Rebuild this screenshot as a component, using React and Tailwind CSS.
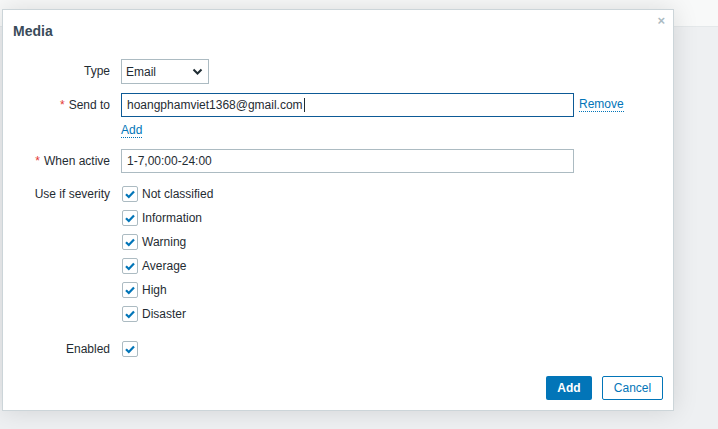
import React from 'react';

const severities = ['Not classified', 'Information', 'Warning', 'Average', 'High', 'Disaster'];

const Check = () => (
  <span className="w-[16px] h-[16px] border border-[#acbbc2] bg-white rounded-[2px] flex items-center justify-center">
    <svg width="12" height="12" viewBox="0 0 12 12">
      <path d="M2 6.2 L4.8 9 L10 3.4" fill="none" stroke="#0275b8" strokeWidth="2.2" />
    </svg>
  </span>
);

const Label = ({ children, req }) => (
  <div className="flex items-center justify-end h-[24px] text-[12px] text-[#1f2c33]">
    {req && <span className="text-[#e33734] mr-[4px]">*</span>}
    {children}
  </div>
);

const App = () => {
  return (
    <div className="relative w-[718px] h-[429px] overflow-hidden bg-[#eef0f2]" style={{ fontFamily: '"Liberation Sans", Arial, sans-serif' }}>
      <div className="h-[27px] bg-[#f8f9f9] border-b border-[#e4e8ea]" />

      <div className="absolute left-[2px] top-[9px] w-[672px] h-[402px] bg-white border border-[#ccd5d9] shadow-[0_0_24px_rgba(0,0,0,0.12)]">
        <button className="absolute right-[8px] top-[4px] text-[#acbbc2] text-[13px] font-bold leading-none">×</button>
        <div className="pl-[10px] pt-[11px] h-[44px] text-[14px] font-bold text-[#394b59]">Media</div>

        <div className="grid grid-cols-[107px_1fr] gap-x-[11px] mt-[5px]">
          <Label>Type</Label>
          <div>
            <div className="w-[88px] h-[25px] border border-[#acbbc2] flex items-center justify-between pl-[4px] pr-[5px] text-[12px] text-[#1f2c33]">
              <span>Email</span>
              <svg width="11" height="8" viewBox="0 0 11 8">
                <path d="M1.5 1.5 L5.5 5.5 L9.5 1.5" fill="none" stroke="#1f2c33" strokeWidth="2" />
              </svg>
            </div>
          </div>

          <div className="mt-[9px]"><Label req>Send to</Label></div>
          <div className="mt-[9px] flex items-center">
            <div className="w-[453px] h-[24px] border border-[#0d5a96] flex items-center px-[5px] text-[12px] text-[#1f2c33]">
              hoangphamviet1368@gmail.com<span className="w-[1px] h-[14px] bg-[#1f2c33] ml-[1px]" />
            </div>
            <a className="ml-[5px] text-[12px] text-[#0275b8] border-b border-dotted border-[#0275b8] leading-[13px]">Remove</a>
          </div>

          <div />
          <div className="h-[32px] pt-[0px]">
            <a className="text-[12px] text-[#0275b8] border-b border-dotted border-[#0275b8] leading-[13px]">Add</a>
          </div>

          <Label req>When active</Label>
          <div>
            <div className="w-[453px] h-[24px] border border-[#acbbc2] flex items-center px-[5px] text-[12px] text-[#1f2c33]">
              1-7,00:00-24:00
            </div>
          </div>

          <div className="mt-[9px]"><Label>Use if severity</Label></div>
          <div className="mt-[9px] flex flex-col">
            {severities.map((s) => (
              <div key={s} className="h-[24px] flex items-center pl-[1px] gap-[4px] text-[12px] text-[#1f2c33]">
                <Check />
                {s}
              </div>
            ))}
          </div>

          <div className="mt-[11px]"><Label>Enabled</Label></div>
          <div className="mt-[11px] h-[24px] flex items-center pl-[1px]">
            <Check />
          </div>
        </div>

        <div className="flex justify-end gap-[10px] pr-[10px] mt-[15px]">
          <button className="h-[24px] w-[46px] bg-[#0275b8] rounded-[2px] text-white text-[12px] font-bold">Add</button>
          <button className="h-[24px] w-[61px] border border-[#0275b8] rounded-[2px] text-[#0275b8] text-[12px] bg-white">Cancel</button>
        </div>
      </div>
    </div>
  );
};

export default App;
